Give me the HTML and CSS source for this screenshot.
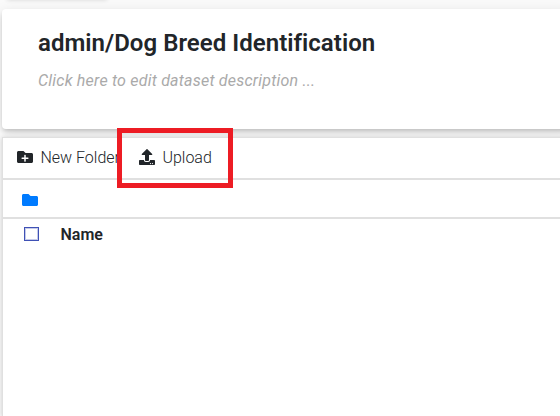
FILE: index.html
```html
<!DOCTYPE html>
<html lang="en">
<head>
<meta charset="utf-8">
<title>Dataset</title>
<link rel="stylesheet" href="styles.css">
</head>
<body>
<div class="tab"></div>
<header class="card">
  <h1 class="title">admin/Dog Breed Identification</h1>
  <p class="description">Click here to edit dataset description ...</p>
</header>
<main class="panel">
  <div class="toolbar">
    <div class="action">
      <svg class="icon" viewBox="0 0 512 512"><path fill="currentColor" d="M464 128H272l-64-64H48C21.500 64 0 85.500 0 112v288c0 26.500 21.500 48 48 48h416c26.500 0 48-21.500 48-48V176c0-26.500-21.500-48-48-48zM368 304c0 8.800-7.200 16-16 16h-72v72c0 8.800-7.200 16-16 16h-16c-8.800 0-16-7.200-16-16v-72h-72c-8.800 0-16-7.200-16-16v-16c0-8.800 7.200-16 16-16h72v-72c0-8.800 7.200-16 16-16h16c8.800 0 16 7.200 16 16v72h72c8.800 0 16 7.200 16 16z"/></svg>
      <span>New Folder</span>
    </div>
    <div class="action upload">
      <svg class="icon" viewBox="0 0 512 512"><path fill="currentColor" d="M296 384h-80c-13.300 0-24-10.700-24-24V192h-87.700c-17.800 0-26.700-21.500-14.100-34.100L242.300 5.700c7.500-7.500 19.800-7.500 27.300 0l152.200 152.200c12.600 12.600 3.700 34.100-14.100 34.100H320v168c0 13.300-10.700 24-24 24zm216-8v112c0 13.300-10.700 24-24 24H24c-13.300 0-24-10.700-24-24V376c0-13.300 10.700-24 24-24h136v8c0 30.900 25.100 56 56 56h80c30.900 0 56-25.100 56-56v-8h136c13.300 0 24 10.700 24 24zm-124 88c0-11-9-20-20-20s-20 9-20 20 9 20 20 20 20-9 20-20zm64 0c0-11-9-20-20-20s-20 9-20 20 9 20 20 20 20-9 20-20z"/></svg>
      <span>Upload</span>
      <div class="highlight"></div>
    </div>
  </div>
  <div class="path">
    <svg class="folder" viewBox="0 0 512 512"><path fill="currentColor" d="M464 128H272l-64-64H48C21.500 64 0 85.500 0 112v288c0 26.500 21.500 48 48 48h416c26.500 0 48-21.500 48-48V176c0-26.500-21.500-48-48-48z"/></svg>
  </div>
  <div class="head">
    <span class="checkbox"></span>
    <span class="name">Name</span>
  </div>
</main>
</body>
</html>
```

FILE: styles.css
```css
* { box-sizing: border-box; }
body {
  margin: 0;
  height: 416px;
  padding-top: 9px;
  overflow: hidden;
  background: #fafafa;
  color: #212529;
  font-family: Roboto, "Liberation Sans", sans-serif;
  font-size: 16px;
}
.tab {
  width: 100px;
  height: 9px;
  margin: -18px 0 9px 7px;
  box-shadow: 0 0 4px rgba(0, 0, 0, .15);
}
.card {
  height: 120px;
  margin: 0 -10px 0 2px;
  padding: 20px 36px;
  border-radius: 4px;
  background: #fff;
  box-shadow: 0 3px 5px -1px rgba(0, 0, 0, .2), 0 3px 14px rgba(0, 0, 0, .1);
}
.title {
  margin: 0;
  font-size: 24px;
  font-weight: 600;
  line-height: 28px;
  letter-spacing: .03px;
}
.description {
  margin: 14px 0 0;
  color: #aaa;
  font-style: italic;
  line-height: 20px;
  letter-spacing: .215px;
}
.panel {
  height: 279px;
  margin: 8px -10px 0 2px;
  border: 1px solid #e0e0e0;
  border-bottom: 0;
  background: #fff;
  box-shadow: 0 1px 5px rgba(0, 0, 0, .2);
}
.toolbar {
  display: flex;
  gap: 19px;
  height: 42px;
  padding: 0 14px 1px;
  border-bottom: 2px solid #e0e0e0;
}
.action {
  position: relative;
  display: flex;
  align-items: center;
  gap: 7.4px;
  width: 103px;
  font-weight: 300;
  white-space: nowrap;
}
.icon { width: 16px; height: 16px; margin-bottom: 2px; flex: none; }
.highlight {
  position: absolute;
  top: -10px;
  left: -22px;
  width: 116px;
  height: 60px;
  border: 5px solid #ed1c24;
}
.path {
  display: flex;
  align-items: center;
  height: 39px;
  padding: 3px 0 0 19px;
  border-bottom: 2px solid #e0e0e0;
}
.folder { width: 16px; height: 16px; color: #007bff; }
.head {
  display: flex;
  align-items: center;
  gap: 21.500px;
  height: 31px;
  padding-left: 21px;
}
.checkbox {
  width: 15px;
  height: 14px;
  margin-bottom: 1px;
  border: 1px solid #3f51b5;
  box-shadow: inset 0 0 0 1px rgba(63, 81, 181, .3);
}
.name { font-weight: 600; }
```
